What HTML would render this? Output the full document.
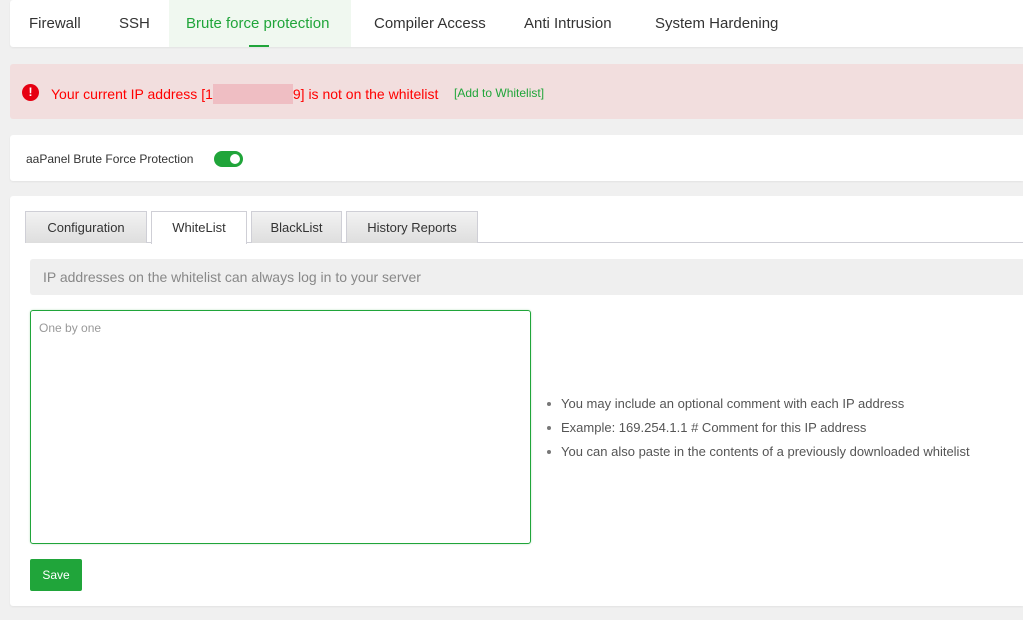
<!DOCTYPE html>
<html><head><style>
*{box-sizing:border-box;margin:0;padding:0}
body{width:1023px;height:620px;background:#f0f0f0;font-family:"Liberation Sans",sans-serif;position:relative;overflow:hidden;color:#333}
.abs{position:absolute}
.card{position:absolute;left:10px;right:0;background:#fff;border-radius:3px 0 0 3px;box-shadow:0 1px 2px rgba(0,0,0,.06)}
.nav span{position:absolute;top:15px;font-size:15px;color:#333}
.tab{position:absolute;top:211px;height:32px;border:1px solid #cfcfd6;border-bottom:none;background:linear-gradient(#f2f2f2,#dedede);font-size:13px;text-align:center;line-height:31px;color:#333}
li{position:absolute;left:561px;font-size:13px;color:#555;list-style:none}
li:before{content:"";position:absolute;left:-14px;top:6px;width:4px;height:4px;border-radius:50%;background:#777}
</style></head><body>
<div class="card nav" style="top:0;height:47px">
<div class="abs" style="left:159px;top:0;width:182px;height:47px;background:#f0f8f0"></div>
<div class="abs" style="left:239px;top:45px;width:20px;height:2px;background:#20a53a"></div>
<span style="left:19px">Firewall</span><span style="left:109px">SSH</span>
<span style="left:176px;color:#20a53a">Brute force protection</span>
<span style="left:364px">Compiler Access</span><span style="left:514px">Anti Intrusion</span><span style="left:645px">System Hardening</span>
</div>
<div class="abs" style="left:10px;right:0;top:64px;height:55px;background:#f2dede;border-radius:3px 0 0 3px"></div>
<div class="abs" style="left:22px;top:84px;width:17px;height:17px;border-radius:50%;background:#e60012;color:#fff;font-size:12px;font-weight:bold;text-align:center;line-height:17px">!</div>
<div class="abs" style="left:51px;top:84px;font-size:14px;color:#f00;white-space:nowrap">Your current IP address [1<span style="display:inline-block;width:80px;height:20px;background:#efbec3;vertical-align:-5px"></span>9] is not on the whitelist</div>
<div class="abs" style="left:454px;top:86px;font-size:12px;color:#20a53a">[Add to Whitelist]</div>
<div class="card" style="top:135px;height:46px">
<div class="abs" style="left:16px;top:17px;font-size:12px">aaPanel Brute Force Protection</div>
<div class="abs" style="left:204px;top:16px;width:29px;height:16px;border-radius:8px;background:#20a53a"><div class="abs" style="right:3px;top:3px;width:10px;height:10px;border-radius:50%;background:#fff"></div></div>
</div>
<div class="card" style="top:196px;height:410px"></div>
<div class="abs" style="left:26px;right:0;top:242px;height:1px;background:#cfcfd6"></div>
<div class="tab" style="left:25px;width:122px">Configuration</div>
<div class="tab" style="left:151px;width:96px;background:#fff;height:33px">WhiteList</div>
<div class="tab" style="left:251px;width:91px">BlackList</div>
<div class="tab" style="left:346px;width:132px">History Reports</div>
<div class="abs" style="left:30px;right:0;top:259px;height:36px;background:#efefef;border-radius:3px 0 0 3px;font-size:14px;color:#888;line-height:36px;padding-left:13px">IP addresses on the whitelist can always log in to your server</div>
<div class="abs" style="left:30px;top:310px;width:501px;height:234px;border:1px solid #20a53a;border-radius:3px;box-shadow:0 0 2px #bfe5c5"><div style="padding:10px 0 0 8px;font-size:12px;color:#999">One by one</div></div>
<ul>
<li style="top:396px">You may include an optional comment with each IP address</li>
<li style="top:420px">Example: 169.254.1.1 # Comment for this IP address</li>
<li style="top:444px">You can also paste in the contents of a previously downloaded whitelist</li>
</ul>
<div class="abs" style="left:30px;top:559px;width:52px;height:32px;background:#20a53a;border-radius:2px;color:#fff;font-size:12px;text-align:center;line-height:32px">Save</div>
</body></html>
